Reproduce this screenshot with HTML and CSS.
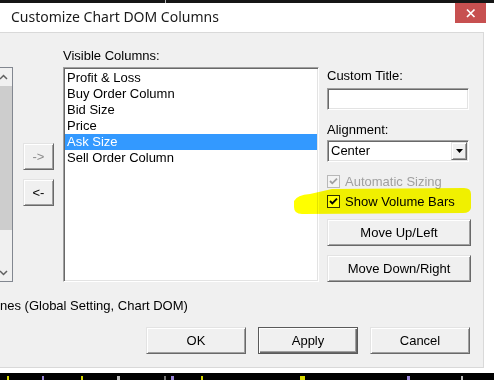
FILE: index.html
```html
<!DOCTYPE html>
<html lang="en">
<head>
  <meta charset="UTF-8" />
  <title>Customize Chart DOM Columns</title>
  <link rel="stylesheet" href="styles.css">
</head>
<body>
  <div class="desk-top"></div>

  <div class="window">
    <div class="titlebar">
      <span class="title">Customize Chart DOM Columns</span>
      <div class="close">
        <svg width="31" height="20" viewBox="0 0 31 20"><path d="M12 6.5 L19.5 14 M19.5 6.5 L12 14" stroke="#fff" stroke-width="1.7" fill="none"/></svg>
      </div>
    </div>

    <div class="client">
      <div class="main">
        <!-- Available columns (cut off on the left) -->
        <div class="peek">
          <div class="scrollbar">
            <div class="sb-arrow">
              <svg width="9" height="6" viewBox="0 0 9 6"><path d="M1 5 L4.5 1.5 L8 5" stroke="#606060" stroke-width="1.5" fill="none"/></svg>
            </div>
            <div class="sb-thumb"></div>
            <div class="sb-arrow">
              <svg width="9" height="6" viewBox="0 0 9 6"><path d="M1 1 L4.5 4.5 L8 1" stroke="#606060" stroke-width="1.5" fill="none"/></svg>
            </div>
          </div>
        </div>

        <div class="arrows">
          <button class="btn btn-arrow" disabled>-&gt;</button>
          <button class="btn btn-arrow">&lt;-</button>
        </div>

        <div class="visible">
          <div class="label">Visible Columns:</div>
          <ul class="listbox">
            <li>Profit &amp; Loss</li>
            <li>Buy Order Column</li>
            <li>Bid Size</li>
            <li>Price</li>
            <li class="selected">Ask Size</li>
            <li>Sell Order Column</li>
          </ul>
        </div>

        <div class="props">
          <div class="label">Custom Title:</div>
          <input class="textbox" type="text" value="" />

          <div class="label label-align">Alignment:</div>
          <div class="combo">
            <span class="combo-text">Center</span>
            <span class="combo-btn">
              <svg width="7" height="4" viewBox="0 0 7 4"><path d="M0 0 H7 L3.5 4 Z" fill="#000"/></svg>
            </span>
          </div>

          <div class="check-row check-first disabled">
            <span class="cb">
              <svg width="11" height="11" viewBox="0 0 11 11"><path d="M2 5 L4.3 7.3 L9 2.6" stroke="#a0a0a0" stroke-width="1.8" fill="none"/></svg>
            </span>
            Automatic Sizing
          </div>
          <div class="check-row">
            <span class="cb">
              <svg width="11" height="11" viewBox="0 0 11 11"><path d="M2 5 L4.3 7.3 L9 2.6" stroke="#000" stroke-width="1.9" fill="none"/></svg>
            </span>
            Show Volume Bars
          </div>

          <button class="btn btn-wide btn-up">Move Up/Left</button>
          <button class="btn btn-wide btn-down">Move Down/Right</button>
        </div>
      </div>

      <div class="global-row">nes (Global Setting, Chart DOM)</div>

      <div class="dlg-btns">
        <button class="btn btn-dlg">OK</button>
        <button class="btn btn-dlg btn-default">Apply</button>
        <button class="btn btn-dlg">Cancel</button>
      </div>

      <!-- highlighter stroke drawn over the checkbox -->
      <svg class="marker" width="182" height="30" viewBox="0 0 182 30">
        <path d="M2 15 Q5 9 18 8 L40 3 L172 2 Q179 2 179 8 L179 22 Q178 27 171 27 L10 28 Q2 28 2 21 Z" fill="#ffff00"/>
      </svg>
    </div>
  </div>

  <div class="desk-bottom"></div>
</body>
</html>
```

FILE: styles.css
```css
/* Dialog styles */
body {
  margin: 0;
  width: 494px;
  height: 380px;
  overflow: hidden;
  background-color: #000000;
  color: #000000;
  font-family: "Liberation Sans", Arial, sans-serif;
  font-size: 13px;
}

.desk-top {
  height: 3px;
  background: linear-gradient(to right, #161616 165px, #b8b8b8 165px 166px, #161616 166px);
}

.window {
  height: 370px;
  box-sizing: border-box;
  padding: 0 10px 5px 0;
  background-color: #ffffff;
  display: flex;
  flex-direction: column;
}

.titlebar {
  height: 29px;
  display: flex;
  justify-content: space-between;
  align-items: flex-start;
}

.title {
  font-family: "Noto Sans", sans-serif;
  font-size: 14px;
  line-height: 20px;
  margin: 4px 0 0 11px;
  color: #1a1a1a;
}

.close {
  width: 31px;
  height: 20px;
  margin-right: -2px;
  background-color: #c75050;
}

.close svg {
  display: block;
}

.client {
  position: relative;
  flex: 1;
  overflow: hidden;
  background-color: #f0f0f0;
  border: 1px solid #d9d9d9;
  border-left: none;
}

.main {
  display: flex;
  align-items: flex-start;
  padding-top: 15px;
}

/* left list, mostly off screen */
.peek {
  width: 12px;
  height: 213px;
  margin-top: 19px;
  border: 1px solid #828790;
  border-left: none;
  overflow: hidden;
  background-color: #ffffff;
}

.scrollbar {
  width: 17px;
  height: 100%;
  margin-left: -5px;
  display: flex;
  flex-direction: column;
  background-color: #f0f0f0;
}

.sb-arrow {
  height: 17px;
  display: flex;
  align-items: center;
  justify-content: center;
}

.sb-arrow svg {
  display: block;
}

.sb-thumb {
  height: 144px;
  margin: 1px 0 auto;
  background-color: #cdcdcd;
}

.arrows {
  margin: 95px 0 0 10px;
  display: flex;
  flex-direction: column;
  gap: 9px;
}

.label {
  line-height: 15px;
  white-space: nowrap;
}

.visible {
  margin-left: 9px;
}

.listbox {
  list-style: none;
  margin: 4px 0 0;
  padding: 1px;
  width: 256px;
  height: 215px;
  box-sizing: border-box;
  background-color: #ffffff;
  border: 1px solid;
  border-color: #a0a0a0 #ffffff #ffffff #a0a0a0;
  box-shadow: inset 1px 1px #696969, inset -1px -1px #e3e3e3;
}

.listbox li {
  line-height: 16px;
  padding-left: 2px;
  white-space: nowrap;
}

.listbox li:first-child {
  margin-top: 1px;
}

.listbox li.selected {
  background-color: #3399ff;
  color: #ffffff;
}

.props {
  width: 144px;
  margin-left: 8px;
  padding-top: 20px;
  display: flex;
  flex-direction: column;
  align-items: flex-start;
}

.textbox {
  width: 142px;
  height: 22px;
  margin: 5px 0 0;
  padding: 0 2px;
  box-sizing: border-box;
  font: inherit;
  background-color: #ffffff;
  border: 1px solid;
  border-color: #a0a0a0 #ffffff #ffffff #a0a0a0;
  box-shadow: inset 1px 1px #696969, inset -1px -1px #e3e3e3;
  outline: none;
}

.label-align {
  margin-top: 12px;
}

.combo {
  width: 142px;
  height: 22px;
  margin-top: 3px;
  box-sizing: border-box;
  display: flex;
  align-items: stretch;
  background-color: #ffffff;
  border: 1px solid;
  border-color: #a0a0a0 #ffffff #ffffff #a0a0a0;
  box-shadow: inset 1px 1px #696969, inset -1px -1px #e3e3e3;
  padding: 1px;
}

.combo-text {
  flex: 1;
  line-height: 18px;
  padding-left: 2px;
}

.combo-btn {
  width: 16px;
  box-sizing: border-box;
  display: flex;
  align-items: center;
  justify-content: center;
  background-color: #f0f0f0;
  border: 1px solid;
  border-color: #e3e3e3 #696969 #696969 #e3e3e3;
  box-shadow: inset 1px 1px #ffffff, inset -1px -1px #a0a0a0;
}

.combo-btn svg {
  display: block;
}

.check-row {
  height: 20px;
  display: flex;
  align-items: center;
  gap: 5px;
  white-space: nowrap;
  line-height: 15px;
}

.check-first {
  margin-top: 9px;
}

.check-row.disabled {
  color: #a0a0a0;
}

.cb {
  width: 13px;
  height: 13px;
  box-sizing: border-box;
  border: 1px solid #333333;
  background-color: #ffffff;
}

.check-row.disabled .cb {
  border-color: #b8b8b8;
  background-color: #f4f4f4;
}

.cb svg {
  display: block;
}

/* classic 3D push buttons */
.btn {
  padding: 0;
  font: inherit;
  color: #000000;
  background-color: #f0f0f0;
  border: 1px solid;
  border-color: #e3e3e3 #696969 #696969 #e3e3e3;
  box-shadow: inset 1px 1px #ffffff, inset -1px -1px #a0a0a0;
  height: 27px;
}

.btn:disabled {
  color: #8c8c8c;
}

.btn-arrow {
  width: 31px;
}

.btn-wide {
  width: 144px;
}

.btn-up {
  margin-top: 8px;
}

.btn-down {
  margin-top: 9px;
}

.global-row {
  margin-top: 16px;
  line-height: 15px;
  white-space: nowrap;
}

.dlg-btns {
  display: flex;
  justify-content: flex-end;
  gap: 12px;
  margin-top: 14px;
  padding-right: 13px;
}

.btn-dlg {
  width: 100px;
}

.btn-default {
  border-color: #5a5a5a;
  box-shadow: inset 1px 1px #ffffff, inset -1px -1px #696969, inset -2px -2px #a0a0a0;
}

.marker {
  position: absolute;
  left: 292px;
  top: 153px;
  mix-blend-mode: multiply;
  pointer-events: none;
}

.desk-bottom {
  height: 7px;
  background: #000000 linear-gradient(to right,
    transparent 7px, #d8d800 7px 9px, transparent 9px 42px,
    #9a86d8 42px 44px, transparent 44px 81px, #d8d800 81px 83px,
    transparent 83px 117px, #bbbbbb 117px 120px, transparent 120px 164px,
    #777777 164px 166px, transparent 166px 171px, #9a86d8 171px 174px,
    transparent 174px 201px, #d8d800 201px 203px, transparent 203px 300px,
    #d8d800 300px 305px, transparent 305px 407px, #9a86d8 407px 410px,
    transparent 410px 461px, #bbbbbb 461px 463px, transparent 463px) left bottom / 100% 4px no-repeat;
}
```
